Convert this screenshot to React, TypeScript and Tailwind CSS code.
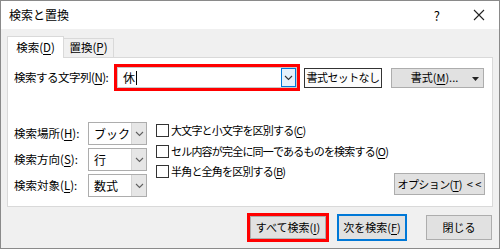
import type { ReactNode } from 'react'

const FONT = { fontFamily: '"Noto Sans CJK JP", "Noto Sans", sans-serif' }

function Key({ k }: { k: string }) {
  return (
    <>
      (<span className="underline underline-offset-2">{k}</span>)
    </>
  )
}

function Chevron({ color = '#606060' }: { color?: string }) {
  return (
    <svg width="9" height="6" viewBox="0 0 9 6">
      <polyline points="1,1 4.5,4.5 8,1" fill="none" stroke={color} strokeWidth="1.1" />
    </svg>
  )
}

function Select({ value }: { value: string }) {
  return (
    <div className="flex h-[23px] w-[59px] border border-[#adadad] bg-white">
      <div className="flex flex-1 items-center pl-[5px] text-[12px]">{value}</div>
      <div className="flex w-[15px] items-center justify-center border-l border-[#d4d4d4] bg-[#e6e6e6]">
        <Chevron />
      </div>
    </div>
  )
}

function Check({ children }: { children: ReactNode }) {
  return (
    <div className="flex h-[20.5px] items-center">
      <span className="mr-[2px] h-[13px] w-[13px] shrink-0 border border-[#333] bg-white" />
      <span className="whitespace-nowrap text-[11px] tracking-[-0.8px]">{children}</span>
    </div>
  )
}

function Button({ className, children }: { className: string; children: ReactNode }) {
  return (
    <div className={'flex items-center justify-center whitespace-nowrap text-[11px] ' + className}>
      {children}
    </div>
  )
}

export default function App() {
  return (
    <div
      className="flex h-[249px] w-[500px] flex-col border border-[#8a8a8a] bg-[#f0f0f0] leading-none text-black"
      style={FONT}
    >
      {/* title bar */}
      <div className="flex h-[28px] items-center bg-white pl-[8px] text-[12px]">
        <span>検索と置換</span>
        <span className="ml-auto mr-[33px] text-[13px]">?</span>
        <svg width="12" height="12" viewBox="0 0 12 12" className="mr-[14px]">
          <path d="M1 1 L11 11 M11 1 L1 11" stroke="#222" strokeWidth="1.1" />
        </svg>
      </div>

      <div className="flex flex-1 flex-col px-[6px]">
        {/* tabs */}
        <div className="mt-[7px] flex items-end text-[11.5px]">
          <div className="relative z-10 -mb-px flex h-[22px] w-[57px] items-center justify-center border border-b-0 border-[#d9d9d9] bg-white">
            検索<Key k="D" />
          </div>
          <div className="-ml-px flex h-[19px] w-[51px] items-center justify-center border border-b-0 border-[#d9d9d9] bg-[#f0f0f0]">
            置換<Key k="P" />
          </div>
        </div>

        {/* panel */}
        <div className="flex h-[150px] flex-col border border-[#d9d9d9] bg-white pl-[6px] pr-[7px] text-[11.5px]">
          <div className="mt-[6px] flex h-[27px] items-center">
            <div className="w-[100px] whitespace-nowrap tracking-[-0.5px]">
              検索する文字列<Key k="N" />:
            </div>
            <div className="flex h-[27px] w-[186px] border-[3px] border-[#ff0000] bg-white">
              <div className="flex flex-1 items-center border border-[#c8c8c8] pl-[5px] text-[12px]">
                <span>休</span>
                <span className="ml-px h-[14px] w-px bg-black" />
                <div className="ml-auto flex h-full w-[15px] items-center justify-center border border-[#0078d7] bg-[#e5f1fb]">
                  <Chevron color="#333" />
                </div>
              </div>
            </div>
            <Button className="ml-[4px] h-[20px] w-[78px] border border-[#333] bg-[#fcfcfc] tracking-[-0.6px]">
              書式セットなし
            </Button>
            <Button className="relative ml-[9px] h-[20px] w-[93px] border border-[#adadad] bg-[#e1e1e1]">
              <span className="mr-[6px]">
                書式<Key k="M" />...
              </span>
              <svg width="7" height="4" viewBox="0 0 7 4" className="absolute right-[4px] top-[8px]">
                <polygon points="0,0 7,0 3.5,4" fill="#222" />
              </svg>
            </Button>
          </div>

          <div className="mt-[31px] flex">
            <div className="flex flex-col gap-[3px]">
              {[
                ['検索場所', 'H', 'ブック'],
                ['検索方向', 'S', '行'],
                ['検索対象', 'L', '数式'],
              ].map(([label, k, v]) => (
                <div key={k} className="flex items-center">
                  <div className="w-[74px] whitespace-nowrap">
                    {label}
                    <Key k={k} />:
                  </div>
                  <Select value={v} />
                </div>
              ))}
            </div>
            <div className="ml-[9px] -mt-[1.5px] flex flex-col">
              <Check>
                大文字と小文字を区別する<Key k="C" />
              </Check>
              <Check>
                セル内容が完全に同一であるものを検索する<Key k="O" />
              </Check>
              <Check>
                半角と全角を区別する<Key k="B" />
              </Check>
            </div>
            <div className="ml-auto flex flex-col justify-end">
              <Button className="mb-[2px] h-[22px] w-[91px] border border-[#adadad] bg-[#e1e1e1] tracking-[-0.6px]">
                オプション<Key k="T" />
                <span className="ml-[5px] tracking-normal">&lt; &lt;</span>
              </Button>
            </div>
          </div>
        </div>

        {/* bottom buttons */}
        <div className="mt-[6px] flex items-center justify-end pr-px">
          <div className="h-[29px] w-[82px] border-[3px] border-[#ff0000]">
            <Button className="h-full w-full border border-[#adadad] bg-[#e1e1e1]">
              すべて検索<Key k="I" />
            </Button>
          </div>
          <Button className="ml-[8px] h-[27px] w-[70px] border-2 border-[#0078d7] bg-[#e1e1e1]">
            次を検索<Key k="F" />
          </Button>
          <Button className="ml-[19px] h-[25px] w-[66px] border border-[#adadad] bg-[#e1e1e1]">
            閉じる
          </Button>
        </div>
      </div>
    </div>
  )
}
